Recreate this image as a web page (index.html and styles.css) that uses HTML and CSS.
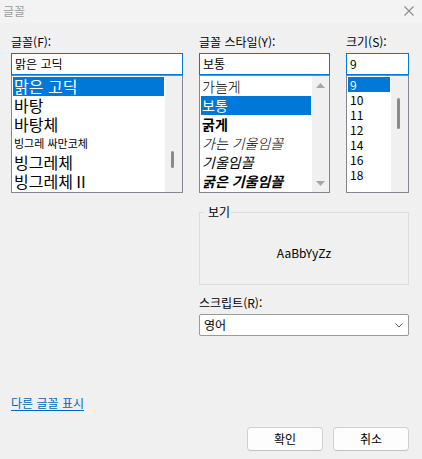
FILE: index.html
```html
<!DOCTYPE html>
<html lang="ko">
<head>
<meta charset="utf-8">
<title>글꼴</title>
<link rel="stylesheet" href="styles.css">
</head>
<body>
<div class="dialog">
  <div class="titlebar">
    <span class="title">글꼴</span>
    <svg class="close" width="10" height="10" viewBox="0 0 10 10"><path d="M0.5 0.5L9.5 9.5M9.5 0.5L0.5 9.5" stroke="#8c8c8c" stroke-width="1.1" fill="none"/></svg>
  </div>
  <div class="content">
    <div class="grid">
      <div class="col">
        <div class="label">글꼴(F):</div>
        <div class="input">맑은 고딕</div>
        <div class="list">
          <div class="items">
            <div class="item sel">맑은 고딕</div>
            <div class="item">바탕</div>
            <div class="item">바탕체</div>
            <div class="item small">빙그레 싸만코체</div>
            <div class="item">빙그레체</div>
            <div class="item">빙그레체Ⅱ</div>
          </div>
          <div class="scrollbar"><div class="thumb thumb-font"></div></div>
        </div>
      </div>
      <div class="col">
        <div class="label">글꼴 스타일(Y):</div>
        <div class="input">보통</div>
        <div class="list">
          <div class="items style-items">
            <div class="item light">가늘게</div>
            <div class="item sel">보통</div>
            <div class="item bold">굵게</div>
            <div class="item light italic">가는 기울임꼴</div>
            <div class="item italic">기울임꼴</div>
            <div class="item bold italic">굵은 기울임꼴</div>
          </div>
          <div class="scrollbar arrows">
            <svg width="9" height="5" viewBox="0 0 9 5"><path d="M0 5L4.5 0L9 5Z" fill="#a6a6a6"/></svg>
            <svg width="9" height="5" viewBox="0 0 9 5"><path d="M0 0L4.5 5L9 0Z" fill="#a6a6a6"/></svg>
          </div>
        </div>
      </div>
      <div class="col">
        <div class="label">크기(S):</div>
        <div class="input">9</div>
        <div class="list">
          <div class="items size-items">
            <div class="item sel">9</div>
            <div class="item">10</div>
            <div class="item">11</div>
            <div class="item">12</div>
            <div class="item">14</div>
            <div class="item">16</div>
            <div class="item">18</div>
          </div>
          <div class="scrollbar"><div class="thumb thumb-size"></div></div>
        </div>
      </div>
      <div class="lower">
        <fieldset class="preview">
          <legend>보기</legend>
          <div class="sample">AaBbYyZz</div>
        </fieldset>
        <div class="label script-label">스크립트(R):</div>
        <div class="select">
          <span>영어</span>
          <svg width="8" height="5" viewBox="0 0 8 5"><path d="M0.5 0.5L4 4L7.5 0.5" stroke="#5f5f5f" stroke-width="1" fill="none"/></svg>
        </div>
      </div>
    </div>
    <div class="linkrow"><a class="link" href="#">다른 글꼴 표시</a></div>
    <div class="buttons">
      <button class="btn">확인</button>
      <button class="btn">취소</button>
    </div>
  </div>
</div>
</body>
</html>
```
FILE: styles.css
```css
html, body {
  margin: 0;
  padding: 0;
}
body {
  width: 422px;
  height: 459px;
  overflow: hidden;
  background: #f0f0f0;
  font-family: "Noto Sans CJK KR", "Noto Sans", sans-serif;
  font-size: 12px;
  color: #000;
}
.dialog {
  width: 422px;
  height: 459px;
}
.titlebar {
  height: 23px;
  background: #f3f3f3;
  display: flex;
  align-items: center;
  justify-content: space-between;
  padding: 0 8px 0 3px;
  box-sizing: border-box;
}
.title {
  color: #9b9b9b;
  font-size: 12px;
  line-height: 14px;
  margin-top: -2px;
}
.close {
  margin-top: -2px;
}
.content {
  padding: 9px 13px 0 11px;
}
.grid {
  display: grid;
  grid-template-columns: 172px 131px 63px;
  column-gap: 16px;
}
.label {
  height: 20px;
  line-height: 20px;
  margin-bottom: 1px;
  white-space: nowrap;
}
.input {
  height: 22px;
  box-sizing: border-box;
  border: 1px solid #0078d7;
  background: #fff;
  padding-left: 3px;
  line-height: 20px;
}
.list {
  height: 118px;
  box-sizing: border-box;
  border: 1px solid #828790;
  background: #fff;
  display: flex;
}
.items {
  flex: 1;
  min-width: 0;
  padding: 1px;
}
.item {
  height: 19px;
  line-height: 19px;
  padding-left: 1px;
  font-size: 16px;
  white-space: nowrap;
}
.item.small {
  font-size: 11px;
}
.style-items .item {
  font-size: 14px;
}
.size-items .item {
  height: 15px;
  line-height: 15px;
  padding-left: 2px;
  font-size: 12px;
}
.item.sel {
  background: #0078d7;
  color: #fff;
}
.light { font-weight: 300; }
.bold { font-weight: 700; }
.italic { font-style: italic; }
.scrollbar {
  width: 17px;
  flex: none;
  background: #f0f0f0;
}
.thumb {
  width: 3px;
  margin-left: 6px;
  background: #8a8a8a;
  border-radius: 1.5px;
}
.thumb-font {
  margin-top: 75px;
  height: 17px;
}
.thumb-size {
  margin-top: 22px;
  height: 31px;
}
.scrollbar.arrows {
  display: flex;
  flex-direction: column;
  justify-content: space-between;
  align-items: center;
  padding: 7px 0 6px;
  box-sizing: border-box;
}
.scrollbar.arrows svg {
  display: block;
}
.lower {
  grid-column: 2 / 4;
}
.preview {
  margin: 11px 0 0;
  padding: 0;
  border: 1px solid #dcdcdc;
  min-width: 0;
}
.preview legend {
  margin-left: 4px;
  padding: 0 1px 0 4px;
  line-height: 16px;
  font-size: 12px;
}
.sample {
  height: 64px;
  box-sizing: border-box;
  padding-top: 25px;
  line-height: 16px;
  text-align: center;
}
.script-label {
  margin-top: 8px;
}
.select {
  height: 22px;
  box-sizing: border-box;
  border: 1px solid #9a9a9a;
  border-radius: 2px;
  background: #fff;
  display: flex;
  align-items: center;
  justify-content: space-between;
  padding: 0 5px 0 4px;
  line-height: 20px;
}
.select svg {
  display: block;
}
.linkrow {
  margin-top: 59px;
  height: 16px;
  line-height: 16px;
}
.link {
  color: #0067c0;
  text-decoration: underline;
  text-underline-offset: 2px;
}
.buttons {
  margin-top: 16px;
  display: flex;
  justify-content: flex-end;
  gap: 10px;
}
.btn {
  width: 76px;
  height: 24px;
  box-sizing: border-box;
  border: 1px solid #d0d0d0;
  border-bottom-color: #c2c2c2;
  border-radius: 4px;
  background: #fdfdfd;
  font-family: inherit;
  font-size: 12px;
  line-height: 20px;
  color: #000;
  padding: 0;
}
```
